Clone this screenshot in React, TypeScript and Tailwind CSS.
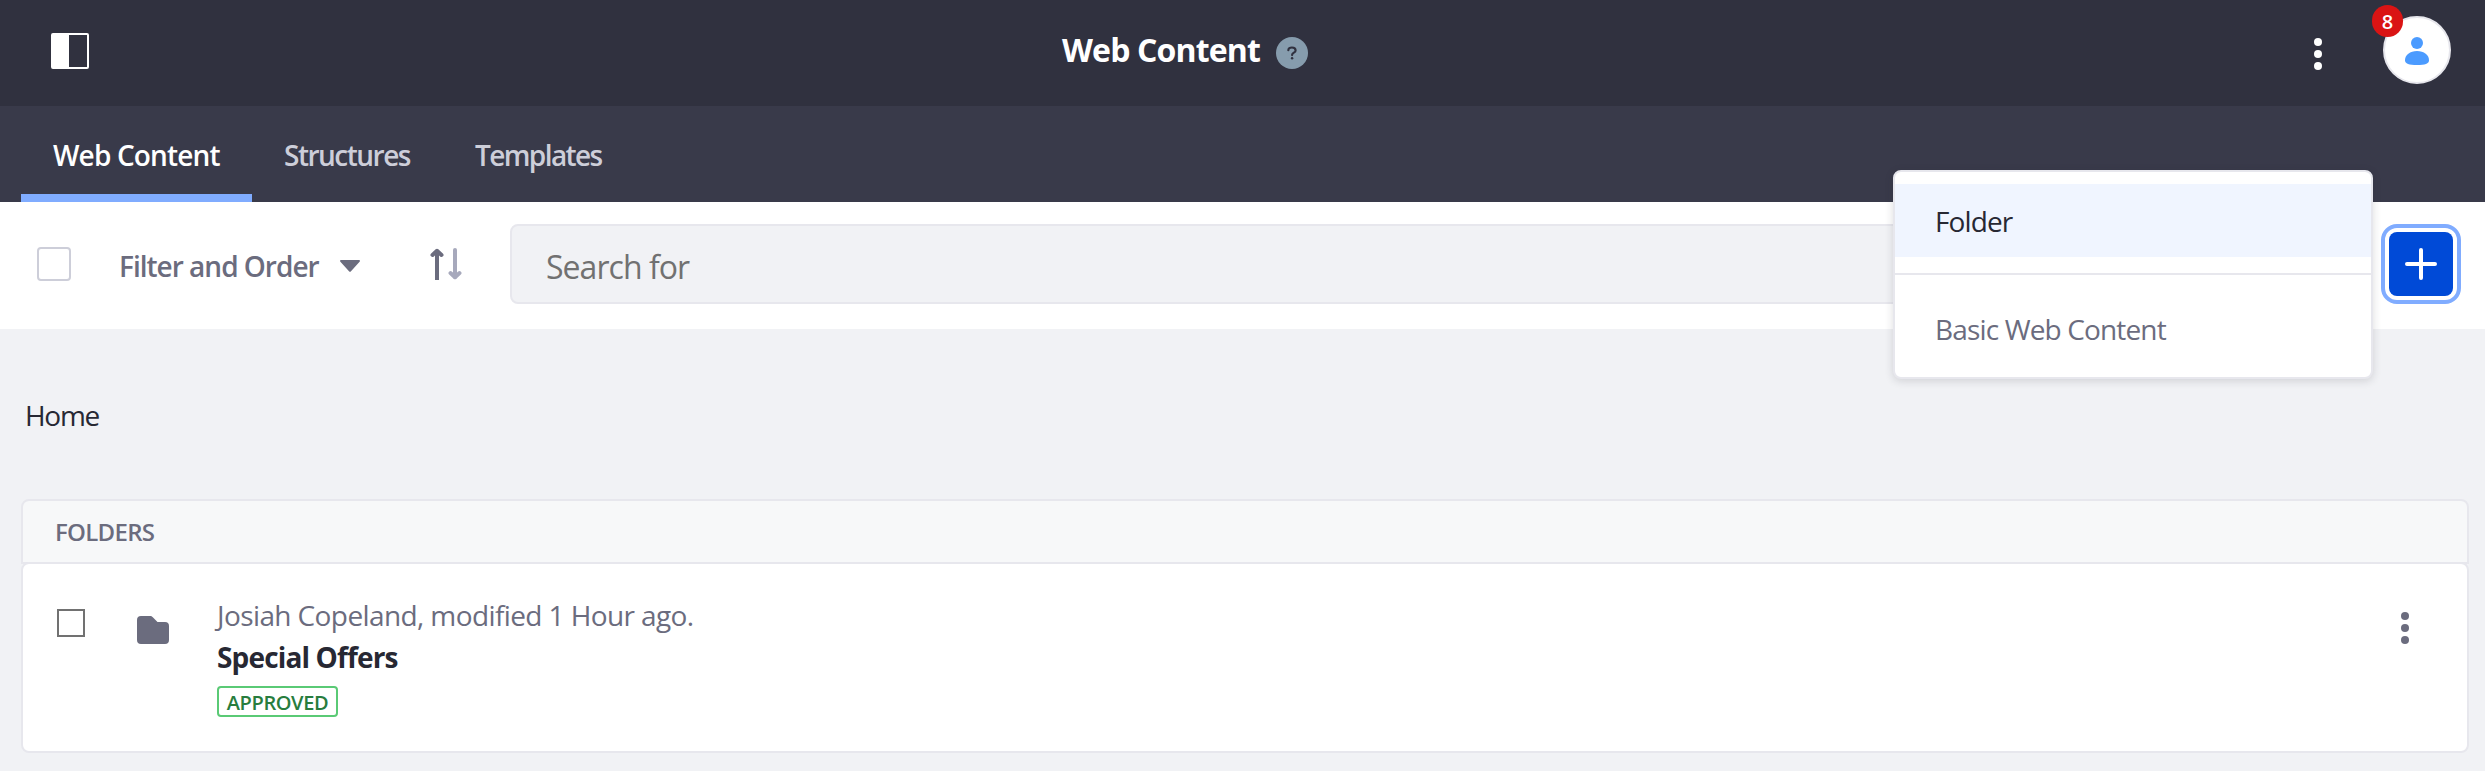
import React from "react";

function Dots({ className }: { className: string }) {
  return (
    <svg viewBox="0 0 8 32" className={className} fill="currentColor">
      <circle cx="4" cy="4" r="4" />
      <circle cx="4" cy="16" r="4" />
      <circle cx="4" cy="28" r="4" />
    </svg>
  );
}

function Header() {
  return (
    <header className="flex h-[106px] items-start bg-[#30313f] pl-[51px] text-white">
      <svg viewBox="0 0 38 36" className="mt-[33px] h-9 w-[38px] shrink-0">
        <rect x="1" y="1" width="36" height="34" rx="1" fill="none" stroke="#fff" strokeWidth="2" />
        <rect x="1" y="1" width="17" height="34" fill="#fff" />
      </svg>
      <h1 className="ml-[973px] mt-[29px] w-[214px] whitespace-nowrap text-[32px] leading-[42px] font-bold tracking-[-0.85px]">
        Web Content
      </h1>
      <span className="mt-[37px] flex size-8 shrink-0 items-center justify-center rounded-full bg-[#869cad] text-[#30313f]">
        <svg viewBox="0 0 12 16" className="h-[14px] w-[10px]" fill="none" stroke="currentColor" strokeWidth="2.600">
          <path d="M1.600 4.600C1.600 2.600 3.400 1.400 5.900 1.400s4.400 1.300 4.400 3.500c0 2.900-4.200 2.600-4.200 5.600" strokeLinecap="round" />
          <circle cx="6.1" cy="14.4" r="1.5" fill="currentColor" stroke="none" />
        </svg>
      </span>
      <Dots className="ml-[1006px] mt-[38px] h-8 w-2 shrink-0" />
      <div className="relative ml-[61px] mt-4 flex size-[68px] shrink-0 items-center justify-center rounded-full border-2 border-[#e7e7ed] bg-white">
        <svg viewBox="0 0 24 28" className="mt-[2px] h-7 w-6" fill="#4b9bff">
          <circle cx="12" cy="6" r="6" />
          <path d="M12 14c7 0 12 4 12 9.200 0 3.300-4 4.800-12 4.800S0 26.500 0 23.200C0 18 5 14 12 14z" />
        </svg>
        <span className="absolute -left-[13px] -top-[13px] flex h-8 w-[31px] items-center justify-center rounded-full bg-[#da1414] pt-px text-[20px] leading-none font-semibold">
          8
        </span>
      </div>
    </header>
  );
}

function Tabs() {
  return (
    <nav className="flex h-24 bg-[#393a4a] pl-[21px] text-[28px] font-semibold leading-[98px] whitespace-nowrap text-[#cdced9]">
      <a className="h-24 w-[231px] border-b-8 border-[#80acff] pl-8 tracking-[-0.85px] text-white">Web Content</a>
      <a className="w-[191px] pl-8 tracking-[-1.5px]">Structures</a>
      <a className="pl-8 tracking-[-1.6px]">Templates</a>
    </nav>
  );
}

function CreateMenu() {
  return (
    <div className="absolute -top-8 right-28 h-[209px] w-[480px] rounded-lg border-2 border-[#e7e7ed] bg-white pt-3 text-[28px] leading-[74px] shadow-[0_2px_8px_rgba(39,40,51,0.16)]">
      <div className="h-[73px] bg-[#f0f5ff] pl-10 text-[#272833]">
        <span className="tracking-[-0.9px]">Folder</span>
      </div>
      <div className="mt-4 mb-[17px] h-[2px] bg-[#e7e7ed]" />
      <div className="h-[73px] pl-10 text-[#6b6c7e]">
        <span className="tracking-[-0.85px]">Basic Web Content</span>
      </div>
    </div>
  );
}

function Toolbar() {
  return (
    <div className="relative flex h-[127px] items-start bg-white pl-[37px]">
      <span className="mt-[45px] size-[34px] shrink-0 rounded-[4px] border-2 border-[#cdced9]" />
      <span className="ml-12 mt-11 w-[221px] text-[28px] leading-10 font-semibold whitespace-nowrap tracking-[-1px] text-[#6b6c7e]">
        Filter and Order
      </span>
      <svg viewBox="0 0 20 12" className="mt-[58px] h-3 w-5 shrink-0" fill="#6b6c7e">
        <path d="M1 0h18c1 0 1.300 1 .6 1.700L11 11.200c-.6.700-1.400.700-2 0L.4 1.700C-.3 1 0 0 1 0z" />
      </svg>
      <svg viewBox="0 0 32 32" className="ml-[70px] mt-[46px] size-8 shrink-0" fill="none" strokeWidth="4">
        <g stroke="#6b6c7e">
          <path d="M7 32V3" />
          <path d="M2.500 7L7 2.800 11.500 7" strokeLinecap="round" strokeLinejoin="round" />
        </g>
        <g stroke="#a7a9bc">
          <path d="M25 29V2" strokeLinecap="round" />
          <path d="M20.500 25l4.500 4.200 4.500-4.200" strokeLinecap="round" strokeLinejoin="round" />
        </g>
      </svg>
      <div className="ml-12 mt-[22px] h-20 w-[1840px] shrink-0 rounded-lg border-2 border-[#e7e7ed] bg-[#f1f2f5] pl-[34px] text-[32px] leading-[81px] text-[#717171]">
        <span className="tracking-[-0.95px]">Search for</span>
      </div>
      <button className="ml-[31px] mt-[22px] flex size-20 shrink-0 items-center justify-center rounded-2xl border-4 border-[#80acff] bg-white">
        <span className="flex size-16 items-center justify-center rounded-lg bg-[#004ad7]">
          <svg viewBox="0 0 32 32" className="size-8" stroke="#fff" strokeWidth="4" strokeLinecap="round">
            <path d="M16 2v28M2 16h28" />
          </svg>
        </span>
      </button>
      <CreateMenu />
    </div>
  );
}

function FolderList() {
  return (
    <section className="mr-4 ml-[21px] mt-[64px]">
      <div className="h-[65px] rounded-t-lg border-2 border-[#e7e7ed] bg-[#f7f8f9] pl-8 text-[24px] leading-[61px] font-semibold text-[#6b6c7e]">
        <span className="tracking-[-0.7px]">FOLDERS</span>
      </div>
      <div className="-mt-[2px] flex h-[191px] items-start rounded-lg border-2 border-[#e7e7ed] bg-white pl-[34px]">
        <span className="mt-[45px] size-7 shrink-0 border-2 border-[#717171]" />
        <svg viewBox="0 0 32 28" className="ml-[52px] mt-[52px] h-7 w-8 shrink-0" fill="#6b6c7e">
          <path d="M0 4a4 4 0 0 1 4-4h9c1.200 0 2 .4 2.800 1.200L20.500 6H28a4 4 0 0 1 4 4v14a4 4 0 0 1-4 4H4a4 4 0 0 1-4-4z" />
        </svg>
        <div className="ml-12 mt-[30px] flex flex-col items-start whitespace-nowrap text-[28px] leading-[42px]">
          <span className="tracking-[-0.6px] text-[#6b6c7e]">Josiah Copeland, modified 1 Hour ago.</span>
          <span className="font-bold tracking-[-0.85px] text-[#272833]">Special Offers</span>
          <span className="mt-[8px] flex h-[31px] w-[121px] items-center justify-center rounded-[4px] border-2 border-[#5aca75] pt-[2px] text-[20px] font-semibold tracking-[-0.4px] text-[#287d3d]">
            APPROVED
          </span>
        </div>
        <Dots className="mt-12 mr-[58px] ml-auto h-8 w-2 shrink-0 text-[#6b6c7e]" />
      </div>
    </section>
  );
}

export default function App() {
  return (
    <main className="h-[771px] w-[2485px] overflow-hidden bg-[#f1f2f5] font-['Open_Sans','Noto_Sans',sans-serif]">
      <Header />
      <Tabs />
      <Toolbar />
      <div className="mt-[66px] h-10 pl-[25px] text-[28px] leading-[41px] text-[#272833]">
        <span className="tracking-[-1.3px]">Home</span>
      </div>
      <FolderList />
    </main>
  );
}
